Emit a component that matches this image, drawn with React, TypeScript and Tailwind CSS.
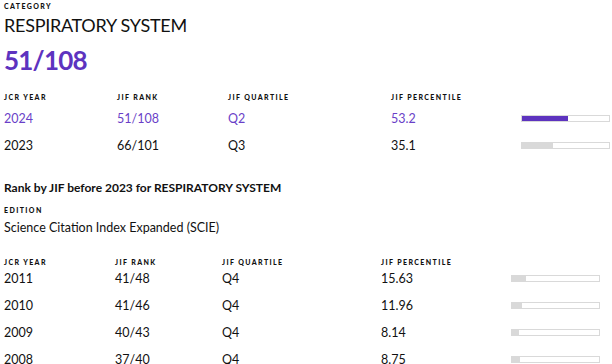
import React from 'react';

const font = { fontFamily: 'Lato, "Noto Sans", sans-serif' };

const recent = [
  { year: '2024', rank: '51/108', q: 'Q2', pct: 53.2, active: true },
  { year: '2023', rank: '66/101', q: 'Q3', pct: 35.1, active: false },
];

const older = [
  { year: '2011', rank: '41/48', q: 'Q4', pct: 15.63 },
  { year: '2010', rank: '41/46', q: 'Q4', pct: 11.96 },
  { year: '2009', rank: '40/43', q: 'Q4', pct: 8.14 },
  { year: '2008', rank: '37/40', q: 'Q4', pct: 8.75 },
];

function Label({ children }: { children: React.ReactNode }) {
  return <div className="text-[7px] leading-[10px] font-black tracking-[0.2em] uppercase text-[#111]">{children}</div>;
}

function Bar({ pct, purple }: { pct: number; purple?: boolean }) {
  return (
    <div className="w-[89px] h-[7px] border border-[#d9d9d9] bg-white">
      <div className={purple ? 'h-full bg-[#5d33bf]' : 'h-full bg-[#d9d9d9]'} style={{ width: `${pct}%` }} />
    </div>
  );
}

export default function App() {
  return (
    <div className="w-[612px] h-[364px] overflow-hidden bg-white text-[#111] pl-1" style={font}>
      <div className="pt-[1px]">
        <Label>Category</Label>
        <div className="text-[18px] leading-[22px] tracking-[-0.015em] mt-[3px]">RESPIRATORY SYSTEM</div>
        <div className="text-[26px] leading-[32px] font-bold tracking-[-0.03em] text-[#5d33bf] mt-[8px]">51/108</div>
      </div>

      {/* current years */}
      <div className="grid grid-cols-[113px_111px_163px_130px_89px] grid-rows-[17px_27px_27px] items-center mt-[12px]">
        <Label>JCR Year</Label>
        <Label>JIF Rank</Label>
        <Label>JIF Quartile</Label>
        <Label>JIF Percentile</Label>
        <div />
        {recent.map((r) => (
          <React.Fragment key={r.year}>
            {[r.year, r.rank, r.q, r.pct.toString()].map((v, i) => (
              <div key={i} className={`text-[12.5px] leading-[16px] pt-[1px] ${r.active ? 'text-[#6a3fc8]' : ''}`}>{v}</div>
            ))}
            <Bar pct={r.pct} purple={r.active} />
          </React.Fragment>
        ))}
      </div>

      <div className="text-[12px] leading-[16px] font-bold mt-[21px]">Rank by JIF before 2023 for RESPIRATORY SYSTEM</div>
      <div className="mt-[9px]"><Label>Edition</Label></div>
      <div className="text-[12.5px] leading-[16px] mt-[5px]">Science Citation Index Expanded (SCIE)</div>

      {/* before 2023 */}
      <div className="grid grid-cols-[111px_107px_159px_130px_89px] grid-rows-[16px_27px_27px_27px_27px] mt-[18px]">
        <div className="self-center"><Label>JCR Year</Label></div>
        <div className="self-center"><Label>JIF Rank</Label></div>
        <div className="self-center"><Label>JIF Quartile</Label></div>
        <div className="self-center"><Label>JIF Percentile</Label></div>
        <div />
        {older.map((r) => (
          <React.Fragment key={r.year}>
            {[r.year, r.rank, r.q, r.pct.toString()].map((v, i) => (
              <div key={i} className="text-[12.5px] leading-[16px] pt-[1px]">{v}</div>
            ))}
            <div className="h-[16px] flex items-center">
              <Bar pct={r.pct} />
            </div>
          </React.Fragment>
        ))}
      </div>
    </div>
  );
}
